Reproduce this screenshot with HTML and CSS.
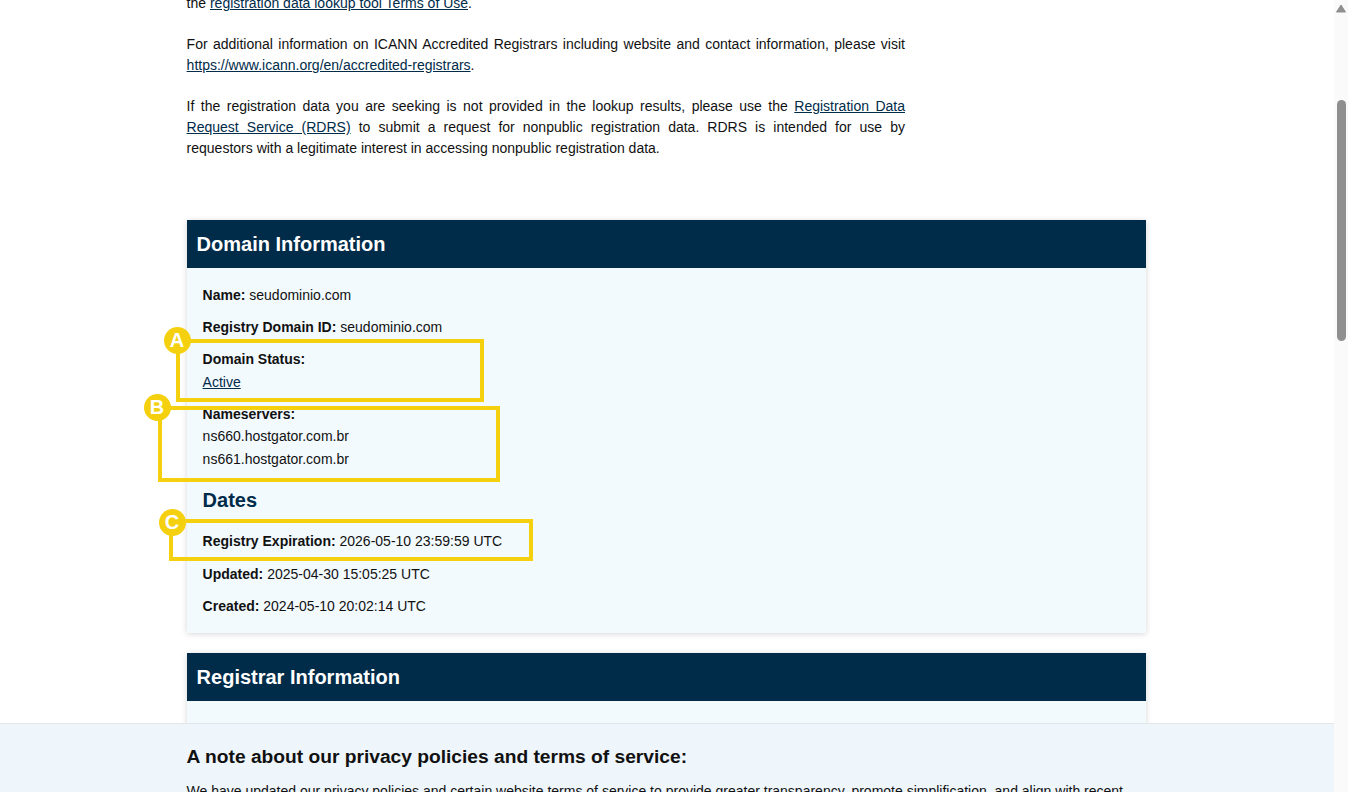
FILE: index.html
```html
<!DOCTYPE html>
<html lang="en">
<head>
<meta charset="utf-8">
<title>Registration Data Lookup</title>
<link rel="stylesheet" href="styles.css">
</head>
<body>
<div class="page">
  <main class="viewport">
    <div class="content">
      <section class="intro">
        <p>the <a href="#">registration data lookup tool Terms of Use</a>.</p>
        <p>For additional information on ICANN Accredited Registrars including website and contact information, please visit <a href="#">https://www.icann.org/en/accredited-registrars</a>.</p>
        <p>If the registration data you are seeking is not provided in the lookup results, please use the <a href="#">Registration Data Request Service (RDRS)</a> to submit a request for nonpublic registration data. RDRS is intended for use by requestors with a legitimate interest in accessing nonpublic registration data.</p>
      </section>

      <section class="card">
        <h2 class="card-title">Domain Information</h2>
        <div class="card-body">
          <div class="row"><b>Name:</b> seudominio.com</div>
          <div class="row"><b>Registry Domain ID:</b> seudominio.com</div>
          <div class="row"><b>Domain Status:</b><br><a href="#">Active</a></div>
          <div class="row"><b>Nameservers:</b><br>ns660.hostgator.com.br<br>ns661.hostgator.com.br</div>
          <h3 class="sub-title">Dates</h3>
          <div class="row row-expiry"><b>Registry Expiration:</b> 2026-05-10 23:59:59 UTC</div>
          <div class="row"><b>Updated:</b> 2025-04-30 15:05:25 UTC</div>
          <div class="row"><b>Created:</b> 2024-05-10 20:02:14 UTC</div>
          <div class="mark mark-a"><span class="badge">A</span></div>
          <div class="mark mark-b"><span class="badge">B</span></div>
          <div class="mark mark-c"><span class="badge">C</span></div>
        </div>
      </section>

      <section class="card">
        <h2 class="card-title">Registrar Information</h2>
        <div class="card-body card-body-tail"></div>
      </section>
    </div>

    <aside class="notice">
      <h2 class="notice-title">A note about our privacy policies and terms of service:</h2>
      <p class="notice-text">We have updated our privacy policies and certain website terms of service to provide greater transparency, promote simplification, and align with recent</p>
    </aside>
  </main>

  <div class="scrollbar">
    <svg class="scroll-arrow" width="14" height="17" viewBox="0 0 14 17"><path d="M7 5 L11.5 12 H2.5 Z" fill="#8f8f8f" stroke="#8f8f8f" stroke-linejoin="round"/></svg>
    <div class="scroll-thumb"></div>
  </div>
</div>
</body>
</html>
```

FILE: styles.css
```css
html, body {
  margin: 0;
  height: 100%;
  overflow: hidden;
  background: #fff;
}

body {
  font-family: "Liberation Sans", Arial, sans-serif;
  font-size: 14px;
  color: #111;
}

a {
  color: #002b49;
  text-decoration: underline;
}

.page {
  display: flex;
  height: 792px;
}

.viewport {
  position: relative;
  flex: 1;
  min-width: 0;
  overflow: hidden;
}

.content {
  margin-top: -7px;
  padding: 0 188px 0 186.6px;
}

.intro {
  width: 718.4px;
  margin-bottom: 61px;
  line-height: 21px;
  text-align: justify;
}

.intro p {
  margin: 0 0 20px;
}

.intro p:last-child {
  margin-bottom: 0;
}

.card {
  margin-bottom: 20px;
  background: #f3fafe;
  box-shadow: 0 1px 6px rgba(0, 0, 0, 0.16);
}

.card-title {
  margin: 0;
  padding: 0 10px;
  background: #002b49;
  color: #fff;
  font-size: 20px;
  line-height: 48px;
  font-weight: 700;
}

.card-body {
  position: relative;
  height: 365px;
  box-sizing: border-box;
  padding: 15.5px 16px 0;
}

.card-body-tail {
  height: 200px;
}

.row {
  margin-bottom: 9.4px;
  line-height: 22.75px;
}

.row-expiry {
  margin-bottom: 9.6px;
}

.sub-title {
  margin: 15px 0 16.4px;
  color: #002b49;
  font-size: 20px;
  line-height: 28px;
  font-weight: 700;
}

.mark {
  position: absolute;
  box-sizing: border-box;
  border: 4px solid #f5d00f;
}

.mark-a { left: -11px; top: 71px; width: 308px; height: 63px; }
.mark-b { left: -29px; top: 138px; width: 342px; height: 76px; }
.mark-c { left: -18px; top: 251px; width: 364px; height: 42px; }

.badge {
  position: absolute;
  display: flex;
  align-items: center;
  justify-content: center;
  width: 27px;
  height: 27px;
  border-radius: 50%;
  background: #f5d00f;
  color: #fff;
  font-size: 20px;
  font-weight: 700;
}

.mark-a .badge { left: -16px; top: -16px; }
.mark-b .badge { left: -18px; top: -16px; }
.mark-c .badge { left: -14px; top: -14px; }

.notice {
  position: absolute;
  left: 0;
  right: 0;
  top: 723px;
  height: 69px;
  box-sizing: border-box;
  padding: 21px 187px 0 186.6px;
  overflow: hidden;
  background: #eef5fb;
  border-top: 1px solid #e3e6e9;
}

.notice-title {
  margin: 0 0 12px;
  color: #111;
  font-size: 19.2px;
  line-height: 24px;
  font-weight: 700;
}

.notice-text {
  margin: 0;
  line-height: 21px;
  white-space: nowrap;
}

.scrollbar {
  position: relative;
  flex: 0 0 14px;
  background: #fafafa;
}

.scroll-arrow {
  display: block;
}

.scroll-thumb {
  position: absolute;
  left: 3px;
  top: 100px;
  width: 9px;
  height: 241px;
  border-radius: 5px;
  background: #8f8f8f;
}
```
